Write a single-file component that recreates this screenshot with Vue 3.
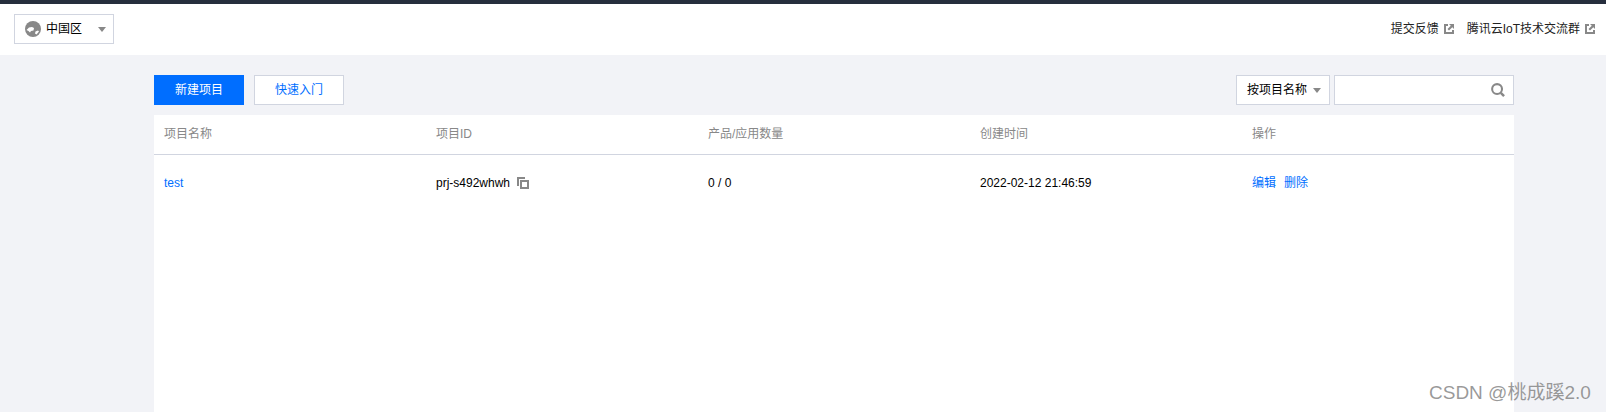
<template>
  <div class="page">
    <header class="top">
      <div class="region">
        <svg class="globe" width="16" height="16" viewBox="0 0 16 16">
          <circle cx="8" cy="8" r="8" fill="#888"/>
          <path d="M1.500 9 4 6.500 7 6l2 1-.5 2.500-2.500.5-1 1.500L3.500 10ZM10.500 10.500l2.500-1 1 1-2.500 3-1.500-1Z" fill="#fff"/>
        </svg>
        <span class="region-name">中国区</span>
        <i class="caret region-caret"></i>
      </div>
      <nav class="links">
        <a>提交反馈<svg class="ext" width="10" height="10" viewBox="0 0 10 10"><path d="M4 1H1v8h8V6" fill="none" stroke="#888" stroke-width="2"/><path d="M5 0h5v5L8.300 3.300 5 6.500 3.500 5l3.300-3.300Z" fill="#888"/></svg></a>
        <a>腾讯云IoT技术交流群<svg class="ext" width="10" height="10" viewBox="0 0 10 10"><path d="M4 1H1v8h8V6" fill="none" stroke="#888" stroke-width="2"/><path d="M5 0h5v5L8.300 3.300 5 6.500 3.500 5l3.300-3.300Z" fill="#888"/></svg></a>
      </nav>
    </header>

    <main class="main">
      <div class="toolbar">
        <button class="btn primary">新建项目</button>
        <button class="btn">快速入门</button>
        <div class="search">
          <div class="search-type">按项目名称<i class="caret"></i></div>
          <div class="search-box">
            <svg width="14" height="14" viewBox="0 0 15 15">
              <circle cx="6.500" cy="6.500" r="5.300" fill="none" stroke="#888" stroke-width="2.200"/>
              <path d="m10.500 10.500 3.500 3.500" stroke="#888" stroke-width="2.600"/>
            </svg>
          </div>
        </div>
      </div>

      <section class="table">
        <div class="row head">
          <div v-for="c in columns" :key="c">{{ c }}</div>
        </div>
        <div class="row body">
          <div><a class="link">test</a></div>
          <div class="id">prj-s492whwh
            <svg class="copy" width="12" height="12" viewBox="0 0 12 12">
              <path d="M0 0h8v2H2v7H0Z" fill="#888"/>
              <path d="M3 3h9v9H3Zm2 2v5h5V5Z" fill="#888" fill-rule="evenodd"/>
            </svg>
          </div>
          <div>0 / 0</div>
          <div>2022-02-12 21:46:59</div>
          <div class="ops"><a class="link">编辑</a><a class="link">删除</a></div>
        </div>
      </section>
    </main>

    <div class="mark">CSDN @桃成蹊2.0</div>
  </div>
</template>

<script setup>
const columns = ['项目名称', '项目ID', '产品/应用数量', '创建时间', '操作']
</script>

<style>
html, body { margin: 0; background: #f2f3f7; }
</style>

<style scoped>
* { box-sizing: border-box; }
.page { position: relative; height: 412px; overflow: hidden; background: #f2f3f7; border-top: 4px solid #262e3d; color: #000; font: 12px/18px "Liberation Sans", "Noto Sans CJK SC", sans-serif; }
.top { height: 51px; background: #fff; display: flex; align-items: flex-start; justify-content: space-between; padding: 10px 11px 0 14px; }
.region { width: 100px; height: 30px; border: 1px solid #d1d5e0; display: flex; align-items: center; padding-left: 10px; }
.region-name { margin-left: 5px; }
.region-caret { margin-left: 16px; }
.caret { display: inline-block; width: 0; height: 0; border: 4px solid transparent; border-top: 5px solid #888; border-bottom: 0; }
.links { display: flex; gap: 13px; margin-top: 6px; }
.links a { display: flex; align-items: center; color: #222; }
.ext { margin-left: 5px; }
.main { padding: 20px 92px 0 154px; }
.toolbar { display: flex; gap: 10px; height: 30px; margin-bottom: 10px; }
.btn { width: 90px; height: 30px; background: #fff; border: 1px solid #d1d5e0; color: #006eff; font: inherit; padding: 0; }
.btn.primary { background: #006eff; border-color: #006eff; color: #fff; }
.search { margin-left: auto; display: flex; gap: 4px; }
.search-type { width: 94px; background: #fff; border: 1px solid #d1d5e0; display: flex; align-items: center; padding-left: 10px; gap: 6px; }
.search-box { width: 180px; background: #fff; border: 1px solid #d1d5e0; display: flex; align-items: center; justify-content: flex-end; padding-right: 8px; }
.table { background: #fff; height: 300px; }
.row { display: grid; grid-template-columns: repeat(5, 272px); }
.row > div { padding: 0 10px; }
.head { height: 40px; align-items: center; color: #888; border-bottom: 1px solid #d1d5e0; padding-bottom: 2px; }
.body { height: 56px; align-items: center; }
.link { color: #006eff; }
.id { display: flex; align-items: center; }
.copy { margin-left: 7px; margin-bottom: 1px; }
.ops { display: flex; gap: 8px; }
.mark { position: absolute; left: 1429px; top: 377px; font-size: 19px; line-height: 24px; color: rgba(120,120,120,.75); font-family: "Liberation Sans", "Noto Sans CJK SC", sans-serif; }
</style>
